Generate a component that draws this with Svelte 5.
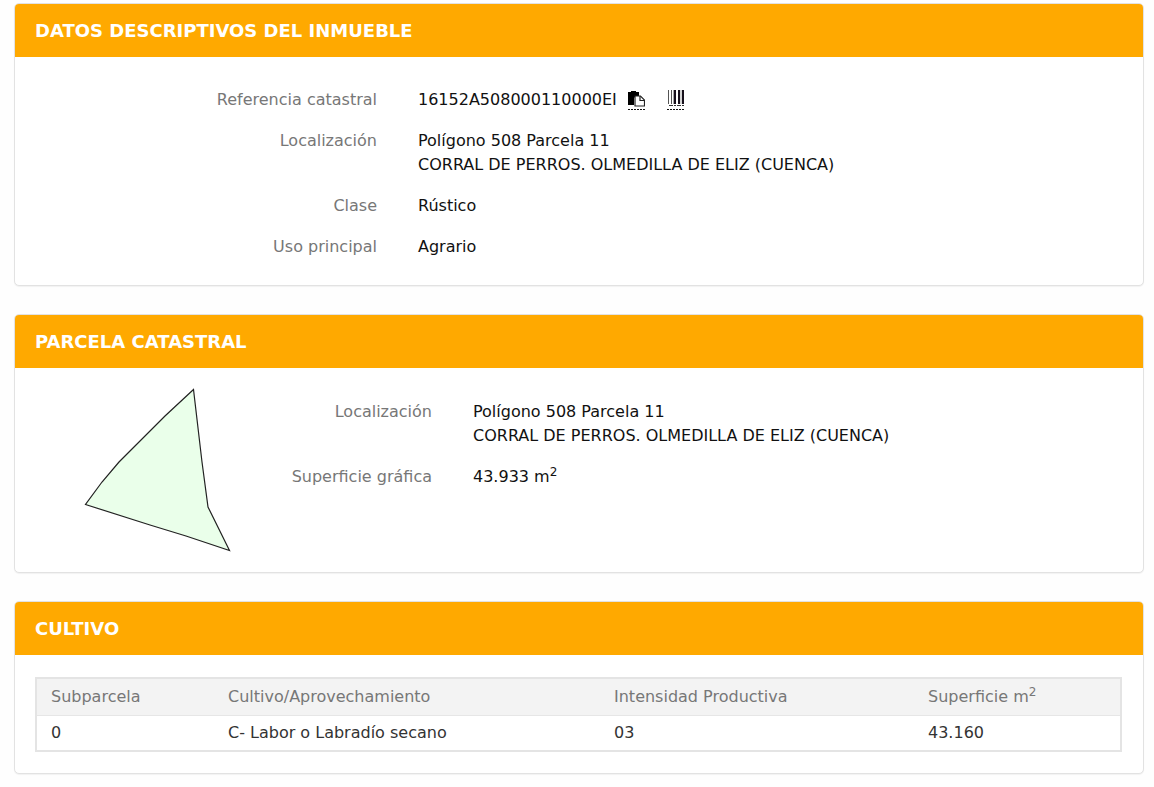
<script>
  const place = ['Polígono 508 Parcela 11', 'CORRAL DE PERROS. OLMEDILLA DE ELIZ (CUENCA)'];
  const crops = [
    { sub: '0', crop: 'C- Labor o Labradío secano', intensity: '03', area: '43.160' }
  ];
</script>

<main>
  <section class="card">
    <h2>DATOS DESCRIPTIVOS DEL INMUEBLE</h2>
    <dl class="fields property">
      <dt>Referencia catastral</dt>
      <dd class="reference">
        <span>16152A508000110000EI</span>
        <button type="button" aria-label="Copiar">
          <svg width="17" height="20" viewBox="0 0 17 20">
            <path d="M0 2h3V1h5v1h3v4H8L6 8v7H0z" fill="#000" />
            <path d="M7 6h5.500l4 4v6H7z" fill="#fff" stroke="#222" stroke-width="1.2" />
            <path d="M12 6v4.500h4.500" fill="none" stroke="#222" stroke-width="1.2" />
            <path d="M0 19.500h17" stroke="#111" stroke-dasharray="2 1" />
          </svg>
        </button>
        <button type="button" aria-label="Código de barras" class="barcode">
          <svg width="18" height="20" viewBox="0 0 18 20">
            <path d="M1.500 0v14M4.500 0v14" stroke="#555" />
            <path d="M8 0v14M12 0v14M16 0v14" stroke="#17101c" stroke-width="2" />
            <path d="M14 0v14M6.500 0v14" stroke="#aaa" />
            <path d="M2 15.500h15" stroke="#333" stroke-dasharray="4 1 2 1" />
            <path d="M0 19.500h18" stroke="#111" stroke-dasharray="2 1" />
          </svg>
        </button>
      </dd>
      <dt>Localización</dt>
      <dd>{place[0]}<br />{place[1]}</dd>
      <dt>Clase</dt>
      <dd>Rústico</dd>
      <dt>Uso principal</dt>
      <dd>Agrario</dd>
    </dl>
  </section>

  <section class="card">
    <h2>PARCELA CATASTRAL</h2>
    <div class="parcel">
      <svg class="plot" width="148" height="164" viewBox="0 0 148 164" role="img" aria-label="Parcela">
        <path d="M109.500 1.500 81 28 35 74 18 94 1.500 116.500 66 137 102 148 145.500 162.500 124 119 118 74Z" fill="#eaffea" stroke="#222" stroke-width="1.2" />
      </svg>
      <dl class="fields">
        <dt>Localización</dt>
        <dd>{place[0]}<br />{place[1]}</dd>
        <dt>Superficie gráfica</dt>
        <dd>43.933 m<sup>2</sup></dd>
      </dl>
    </div>
  </section>

  <section class="card">
    <h2>CULTIVO</h2>
    <div class="crops">
      <table>
        <thead>
          <tr>
            <th scope="col" class="sub">Subparcela</th>
            <th scope="col" class="crop">Cultivo/Aprovechamiento</th>
            <th scope="col" class="intensity">Intensidad Productiva</th>
            <th scope="col">Superficie m<sup>2</sup></th>
          </tr>
        </thead>
        <tbody>
          {#each crops as row}
            <tr>
              <td>{row.sub}</td>
              <td>{row.crop}</td>
              <td>{row.intensity}</td>
              <td>{row.area}</td>
            </tr>
          {/each}
        </tbody>
      </table>
    </div>
  </section>
</main>

<style>
  :global(body) {
    background: #fefefe;
  }

  main {
    display: flex;
    flex-direction: column;
    gap: 28px;
    padding: 3px 10px 13px 14px;
    font-family: Verdana, "DejaVu Sans", sans-serif;
    font-size: 16px;
    line-height: 24px;
    color: #111;
  }

  .card {
    border: 1px solid #e2e2e2;
    border-radius: 5px;
    background: #fff;
    box-shadow: 0 1px 1px #0000000d;
    overflow: hidden;
  }

  h2 {
    margin: 0;
    padding: 15px 20px 14px;
    background: #ffa900;
    color: #fff;
    font-size: 18px;
    line-height: 24px;
    font-weight: bold;
  }

  .fields {
    display: grid;
    column-gap: 41px;
    row-gap: 17px;
    margin: 0;
  }

  .property {
    grid-template-columns: 342px 1fr;
    padding: 31px 20px 26px;
  }

  dt {
    text-align: right;
    color: #777;
  }

  dd {
    margin: 0;
  }

  .reference {
    display: flex;
    align-items: center;
  }

  button {
    display: flex;
    margin: 0 0 0 11px;
    padding: 0;
    border: 0;
    background: none;
    cursor: pointer;
  }

  .barcode {
    margin-left: 22px;
  }

  sup {
    font-size: 12px;
    line-height: 0;
  }

  .parcel {
    display: flex;
    align-items: flex-start;
    padding: 20px 20px 20px 69px;
  }

  .plot {
    flex: none;
  }

  .parcel .fields {
    flex: 1;
    grid-template-columns: 200px 1fr;
    padding-top: 12px;
  }

  .crops {
    padding: 22px 21px 21px 20px;
  }

  table {
    width: 100%;
    border: 2px solid #e4e4e4;
    border-collapse: collapse;
    table-layout: fixed;
  }

  th,
  td {
    padding: 6px 14px;
    text-align: left;
    font-weight: normal;
  }

  th {
    background: #f3f3f3;
    border-bottom: 1px solid #e6e6e6;
    color: #777;
  }

  td {
    padding: 5px 14px;
    color: #333;
  }

  .sub {
    width: 149px;
  }

  .crop {
    width: 358px;
  }

  .intensity {
    width: 286px;
  }
</style>
